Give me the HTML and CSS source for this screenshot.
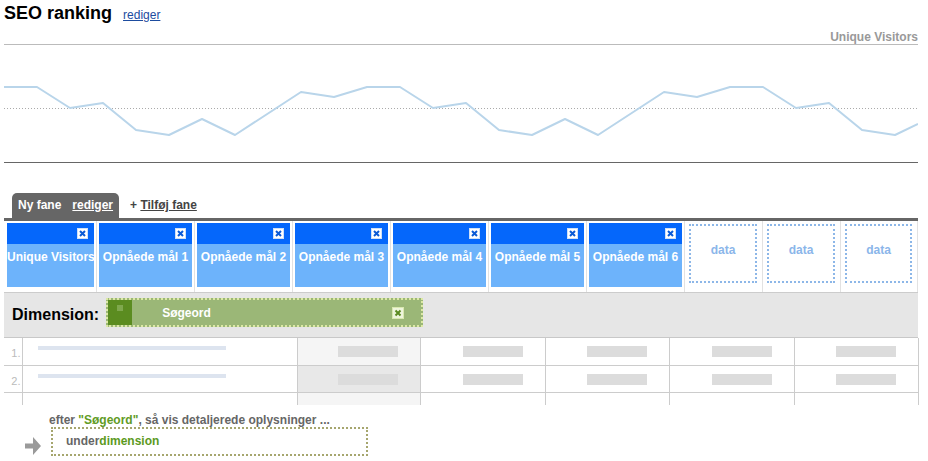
FILE: index.html
```html
<!DOCTYPE html>
<html>

<head>
    <meta charset="utf-8">
    <title>SEO ranking</title>
    <meta name="viewport" content="width=device-width, initial-scale=1">
    <link rel="stylesheet" href="styles.css">
</head>

<body>
    <div class="report-head">
        <h1>SEO ranking</h1>
        <a href="#" class="edit-link">rediger</a>
    </div>

    <div class="chart">
        <div class="chart-label">Unique Visitors</div>
        <svg width="914" height="120" viewBox="0 0 914 120">
            <line x1="0" y1="0.5" x2="914" y2="0.5" stroke="#bbb" stroke-width="1" />
            <line x1="0" y1="64.5" x2="914" y2="64.5" stroke="#aaa" stroke-width="1" stroke-dasharray="1 2" />
            <line x1="0" y1="118.5" x2="914" y2="118.5" stroke="#666" stroke-width="1" />
            <polyline fill="none" stroke="#b9d5ea" stroke-width="2" stroke-linejoin="round"
                points="0,43 33,43 66,64 99,59 132,86 165,91 198,75 231,91 297,48 330,53 363,43 396,43 429,64 462,59 495,86 528,91 561,75 594,91 660,48 693,53 726,43 759,43 792,64 825,59 858,86 891,91 914,80" />
        </svg>
    </div>

    <div class="tabs">
        <div class="tab-active">Ny fane<a href="#">rediger</a></div>
        <div class="tab-add">+ <a href="#">Tilføj fane</a></div>
    </div>
    <div class="tab-bar"></div>

    <div class="metrics">
        <div class="metric">
            <div class="metric-box">
                <div class="metric-top"><svg class="close" width="11" height="11" viewBox="0 0 11 11"><rect x="0.5" y="0.5" width="10" height="10" fill="#fff" stroke="#cfe0f7"/><path d="M3 3 L8 8 M8 3 L3 8" stroke="#0a5ad6" stroke-width="2"/></svg></div>
                <div class="metric-name">Unique Visitors</div>
            </div>
        </div>
        <div class="metric">
            <div class="metric-box">
                <div class="metric-top"><svg class="close" width="11" height="11" viewBox="0 0 11 11"><rect x="0.5" y="0.5" width="10" height="10" fill="#fff" stroke="#cfe0f7"/><path d="M3 3 L8 8 M8 3 L3 8" stroke="#0a5ad6" stroke-width="2"/></svg></div>
                <div class="metric-name">Opnåede mål 1</div>
            </div>
        </div>
        <div class="metric">
            <div class="metric-box">
                <div class="metric-top"><svg class="close" width="11" height="11" viewBox="0 0 11 11"><rect x="0.5" y="0.5" width="10" height="10" fill="#fff" stroke="#cfe0f7"/><path d="M3 3 L8 8 M8 3 L3 8" stroke="#0a5ad6" stroke-width="2"/></svg></div>
                <div class="metric-name">Opnåede mål 2</div>
            </div>
        </div>
        <div class="metric">
            <div class="metric-box">
                <div class="metric-top"><svg class="close" width="11" height="11" viewBox="0 0 11 11"><rect x="0.5" y="0.5" width="10" height="10" fill="#fff" stroke="#cfe0f7"/><path d="M3 3 L8 8 M8 3 L3 8" stroke="#0a5ad6" stroke-width="2"/></svg></div>
                <div class="metric-name">Opnåede mål 3</div>
            </div>
        </div>
        <div class="metric">
            <div class="metric-box">
                <div class="metric-top"><svg class="close" width="11" height="11" viewBox="0 0 11 11"><rect x="0.5" y="0.5" width="10" height="10" fill="#fff" stroke="#cfe0f7"/><path d="M3 3 L8 8 M8 3 L3 8" stroke="#0a5ad6" stroke-width="2"/></svg></div>
                <div class="metric-name">Opnåede mål 4</div>
            </div>
        </div>
        <div class="metric">
            <div class="metric-box">
                <div class="metric-top"><svg class="close" width="11" height="11" viewBox="0 0 11 11"><rect x="0.5" y="0.5" width="10" height="10" fill="#fff" stroke="#cfe0f7"/><path d="M3 3 L8 8 M8 3 L3 8" stroke="#0a5ad6" stroke-width="2"/></svg></div>
                <div class="metric-name">Opnåede mål 5</div>
            </div>
        </div>
        <div class="metric">
            <div class="metric-box">
                <div class="metric-top"><svg class="close" width="11" height="11" viewBox="0 0 11 11"><rect x="0.5" y="0.5" width="10" height="10" fill="#fff" stroke="#cfe0f7"/><path d="M3 3 L8 8 M8 3 L3 8" stroke="#0a5ad6" stroke-width="2"/></svg></div>
                <div class="metric-name">Opnåede mål 6</div>
            </div>
        </div>
        <div class="metric"><div class="metric-empty">data</div></div>
        <div class="metric"><div class="metric-empty">data</div></div>
        <div class="metric"><div class="metric-empty">data</div></div>
    </div>

    <div class="dimension">
        <span class="dim-label">Dimension:</span>
        <div class="dim-pill">
            <span class="dim-grip"><span class="dots"></span></span>
            <span class="dim-name">Søgeord</span>
            <svg class="dim-close" width="12" height="12" viewBox="0 0 12 12"><rect x="0.5" y="0.5" width="11" height="11" fill="#eef5dc" stroke="#d9e8b0"/><path d="M3.5 3.5 L8.5 8.5 M8.5 3.5 L3.5 8.5" stroke="#5b8a22" stroke-width="2"/></svg>
        </div>
    </div>

    <table class="rows">
        <colgroup>
            <col style="width:18px">
            <col style="width:275px">
            <col style="width:123px">
            <col style="width:125px">
            <col style="width:124px">
            <col style="width:125px">
            <col style="width:124px">
        </colgroup>
        <tr>
            <td class="num">1.</td>
            <td><div class="name-bar"></div></td>
            <td class="sorted"><div class="val-bar"></div></td>
            <td><div class="val-bar"></div></td>
            <td><div class="val-bar"></div></td>
            <td><div class="val-bar"></div></td>
            <td><div class="val-bar"></div></td>
        </tr>
        <tr>
            <td class="num">2.</td>
            <td><div class="name-bar"></div></td>
            <td class="sorted dark"><div class="val-bar"></div></td>
            <td><div class="val-bar"></div></td>
            <td><div class="val-bar"></div></td>
            <td><div class="val-bar"></div></td>
            <td><div class="val-bar"></div></td>
        </tr>
        <tr class="last">
            <td class="num"></td>
            <td></td>
            <td class="sorted"></td>
            <td></td>
            <td></td>
            <td></td>
            <td></td>
        </tr>
    </table>

    <div class="sub">
        <p class="sub-hint">efter <b>"Søgeord"</b>, så vis detaljerede oplysninger ...</p>
        <div class="sub-row">
            <svg class="arrow" width="16" height="18" viewBox="0 0 16 18"><path d="M0 6.5 H8 V0 L16 9 L8 18 V11.5 H0 Z" fill="#9a9a9a"/></svg>
            <div class="sub-drop">under<span>dimension</span></div>
        </div>
    </div>
</body>

</html>
```

FILE: styles.css
```css
body {
    margin: 0;
    font-family: "Liberation Sans", Arial, sans-serif;
    font-size: 12px;
    color: #000;
    background-color: #fff;
}

.report-head {
    display: flex;
    align-items: baseline;
    gap: 11px;
    padding: 3px 0 0 4px;
}

.report-head h1 {
    margin: 0;
    font-size: 18px;
    line-height: 21px;
}

.edit-link {
    color: #1d4c9f;
}

/* chart */

.chart {
    margin: 6px 10px 0 4px;
}

.chart-label {
    text-align: right;
    font-weight: bold;
    line-height: 14px;
    color: #999;
}

.chart svg {
    display: block;
}

/* tabs */

.tabs {
    display: flex;
    align-items: flex-end;
    height: 25px;
    margin: 29px 10px 0 12px;
}

.tab-active {
    padding: 0 6px;
    line-height: 25px;
    font-weight: bold;
    color: #fff;
    background-color: #666;
    border-radius: 5px 5px 0 0;
}

.tab-active a {
    margin-left: 11px;
    color: #fff;
}

.tab-add {
    margin-left: 11px;
    line-height: 25px;
    font-weight: bold;
    color: #444;
}

.tab-add a {
    color: #444;
}

.tab-bar {
    height: 3px;
    margin: 0 10px 0 4px;
    background-color: #666;
}

/* metric boxes */

.metrics {
    display: grid;
    grid-template-columns: 93px repeat(6, 98px) 78px 78px 77px;
    height: 71px;
    margin: 0 10px 0 4px;
}

.metric {
    padding: 2px 2px 0 2px;
    border-right: 1px solid #e2e2e2;
}

.metric:first-child {
    padding-left: 3px;
}

.metric-box {
    height: 64px;
    background-color: #6db3fb;
}

.metric-top {
    display: flex;
    justify-content: flex-end;
    align-items: flex-start;
    box-sizing: border-box;
    height: 21px;
    padding: 5px 6px 0 0;
    background-color: #0567fb;
}

.close {
    display: block;
}

.metric-name {
    padding-top: 6px;
    line-height: 14px;
    font-weight: bold;
    color: #fff;
    text-align: center;
    white-space: nowrap;
    overflow: hidden;
}

.metric-empty {
    box-sizing: border-box;
    height: 59px;
    margin: 1px 3px 0 2px;
    padding-top: 17px;
    line-height: 14px;
    border: 2px dotted #8db7e8;
    font-weight: bold;
    color: #8bb6ea;
    text-align: center;
}

/* dimension */

.dimension {
    display: flex;
    align-items: flex-start;
    box-sizing: border-box;
    height: 46px;
    margin: 0 10px 0 4px;
    padding: 5px 0 0 8px;
    background-color: #e6e6e6;
    border-top: 1px solid #ccc;
    border-bottom: 1px solid #c8c8c8;
}

.dim-label {
    margin-top: 7px;
    font-size: 16px;
    line-height: 19px;
    font-weight: bold;
}

.dim-pill {
    display: flex;
    align-items: center;
    box-sizing: border-box;
    width: 317px;
    height: 29px;
    margin-left: 7px;
    border: 2px dotted #dde9a6;
    background-color: #9bb777;
}

.dim-grip {
    display: flex;
    align-items: flex-start;
    justify-content: center;
    align-self: stretch;
    width: 24px;
    padding-top: 5px;
    box-sizing: border-box;
    background-color: #5b8c20;
}

.dots {
    width: 6px;
    height: 6px;
    background-image: radial-gradient(circle, #a9c983 0.6px, transparent 0.8px);
    background-size: 2px 2px;
}

.dim-name {
    flex: 1;
    margin-left: 30px;
    font-weight: bold;
    color: #fff;
}

.dim-close {
    display: block;
    margin-right: 17px;
}

/* rows */

.rows {
    width: 914px;
    margin: 0 10px 0 4px;
    border-collapse: collapse;
    table-layout: fixed;
}

.rows td {
    height: 27px;
    padding: 0;
    vertical-align: top;
    border-left: 1px solid #ccc;
    border-bottom: 1px solid #ccc;
    box-sizing: border-box;
}

.rows td:last-child {
    border-right: 1px solid #ccc;
}

.rows td.num {
    border-left: none;
    padding: 9px 1px 0 0;
    text-align: right;
    font-size: 11px;
    line-height: 12px;
    color: #bbb;
}

.rows tr.last td {
    height: 13px;
    border-bottom: none;
}

.rows td.sorted {
    background-color: #f5f5f5;
}

.rows td.sorted.dark {
    background-color: #e8e8e8;
}

.name-bar {
    width: 188px;
    height: 4px;
    margin: 8px 0 0 15px;
    background-color: #dde4ef;
}

.val-bar {
    width: 60px;
    height: 11px;
    margin: 8px 22px 0 auto;
    background-color: #dcdcdc;
}

/* sub dimension */

.sub-hint {
    margin: 8px 0 0 49px;
    line-height: 14px;
    font-weight: bold;
    color: #666;
}

.sub-hint b {
    color: #619b24;
}

.sub-row {
    display: flex;
    align-items: flex-start;
    padding-left: 25px;
}

.arrow {
    display: block;
    margin: 10px 10px 0 0;
}

.sub-drop {
    box-sizing: border-box;
    width: 317px;
    height: 29px;
    padding-left: 13px;
    line-height: 25px;
    border: 2px dotted #a6a66e;
    font-weight: bold;
    color: #666;
}

.sub-drop span {
    color: #5c9a1e;
}
```
